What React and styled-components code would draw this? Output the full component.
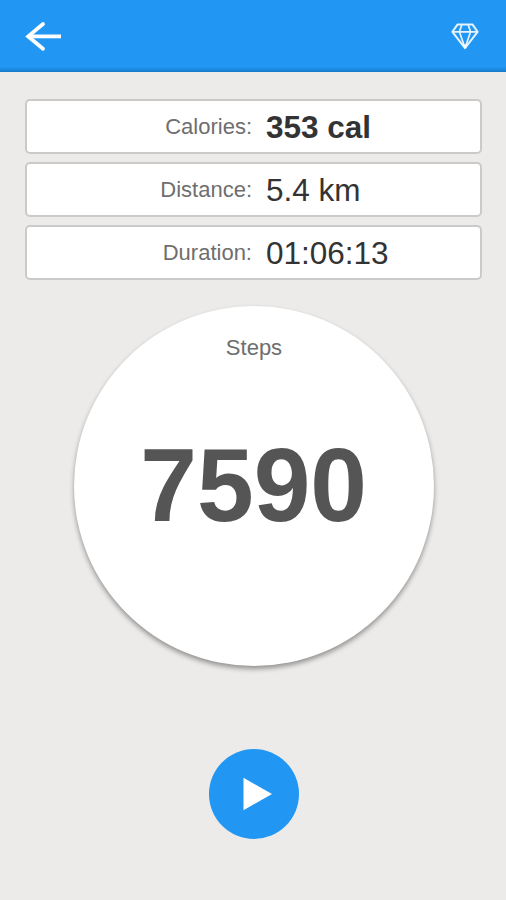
import React from 'react'
import styled, { createGlobalStyle } from 'styled-components'

const STATS = [
  { label: 'Calories:', value: '353 cal', bold: true },
  { label: 'Distance:', value: '5.4 km' },
  { label: 'Duration:', value: '01:06:13' },
]

const App = () => {
  return (
    <>
      <GlobalStyle />
      <Screen>
        <Header>
          <IconButton aria-label='Back'>
            <svg width='38' height='32' viewBox='0 0 38 32' fill='none' stroke='#fff' strokeWidth='3.8'>
              <path d='M37 16.4H5' />
              <path d='M19 4L4.2 16.4L19 28.8' strokeLinecap='round' />
            </svg>
          </IconButton>
          <IconButton aria-label='Premium'>
            <svg width='30' height='28' viewBox='0 0 30 28' fill='none' stroke='#e6f4ff' strokeWidth='2' strokeLinejoin='round'>
              <path d='M7.6 2.4H22.4L27.6 9.8L15 26.2L2.4 9.8Z' />
              <path d='M2.4 9.8H27.6M12 2.4L9.4 9.8L15 26L20.6 9.8L18 2.4' strokeWidth='1.7' />
              <path d='M12.6 22.6H17.4L15 26.4Z' fill='#fff' stroke='none' />
            </svg>
          </IconButton>
        </Header>

        <Stats>
          {STATS.map(({ label, value, bold }) => (
            <StatRow key={label}>
              <Label>{label}</Label>
              <Value $bold={bold}>{value}</Value>
            </StatRow>
          ))}
        </Stats>

        <StepsCircle>
          <StepsLabel>Steps</StepsLabel>
          <StepsCount>7590</StepsCount>
        </StepsCircle>

        <PlayButton aria-label='Start'>
          <svg width='30' height='34' viewBox='0 0 30 34'>
            <path d='M0.5 0.8L29 17L0.5 33.2Z' fill='#fff' />
          </svg>
        </PlayButton>
      </Screen>
    </>
  )
}
export default App

const GlobalStyle = createGlobalStyle`
  * {
    box-sizing: border-box;
  }
  body {
    margin: 0;
    background: #ecebe9;
    font-family: "Liberation Sans", Arial, sans-serif;
  }
`

const Screen = styled.div`
  display: flex;
  flex-direction: column;
  align-items: center;
  width: 506px;
  height: 900px;
  background: #ecebe9;
  overflow: hidden;
`

const Header = styled.header`
  display: flex;
  flex-shrink: 0;
  align-items: center;
  justify-content: space-between;
  width: 100%;
  height: 72px;
  padding: 0 26px 0 24px;
  background: linear-gradient(#2196f3 0, #2196f3 67px, #1a86dc 70px, #1478c8 72px);
`

const IconButton = styled.button`
  display: flex;
  padding: 0;
  border: 0;
  background: none;
`

const Stats = styled.div`
  display: flex;
  flex-direction: column;
  gap: 8px;
  width: 457px;
  margin: 27px 0 0 1px;
`

const StatRow = styled.div`
  display: grid;
  grid-template-columns: 225px 1fr;
  column-gap: 14px;
  align-items: center;
  height: 55px;
  border: 2px solid #cbcac8;
  border-radius: 5px;
  background: #fff;
`

const Label = styled.span`
  color: #6e6e6e;
  font-size: 22px;
  line-height: 26px;
  text-align: right;
`

const Value = styled.span`
  color: #333;
  font-size: 31.5px;
  font-weight: ${({ $bold }) => ($bold ? 700 : 400)};
  line-height: 36px;
  white-space: nowrap;
`

const StepsCircle = styled.div`
  display: flex;
  flex-direction: column;
  flex-shrink: 0;
  align-items: center;
  width: 360px;
  height: 360px;
  margin: 26px 0 0 2px;
  padding-top: 29px;
  border-radius: 50%;
  background: #fff;
  box-shadow: 0 3px 5px rgba(0, 0, 0, 0.38);
`

const StepsLabel = styled.div`
  color: #6e6e6e;
  font-size: 22px;
  line-height: 26px;
`

const StepsCount = styled.div`
  margin-top: 64px;
  color: #555;
  font-size: 104px;
  font-weight: 700;
  line-height: 120px;
  transform: scaleX(0.98);
`

const PlayButton = styled.button`
  display: flex;
  flex-shrink: 0;
  align-items: center;
  justify-content: center;
  width: 90px;
  height: 90px;
  margin: 83px 0 0 2px;
  padding: 0 0 0 7px;
  border: 0;
  border-radius: 50%;
  background: #2196f3;
`
